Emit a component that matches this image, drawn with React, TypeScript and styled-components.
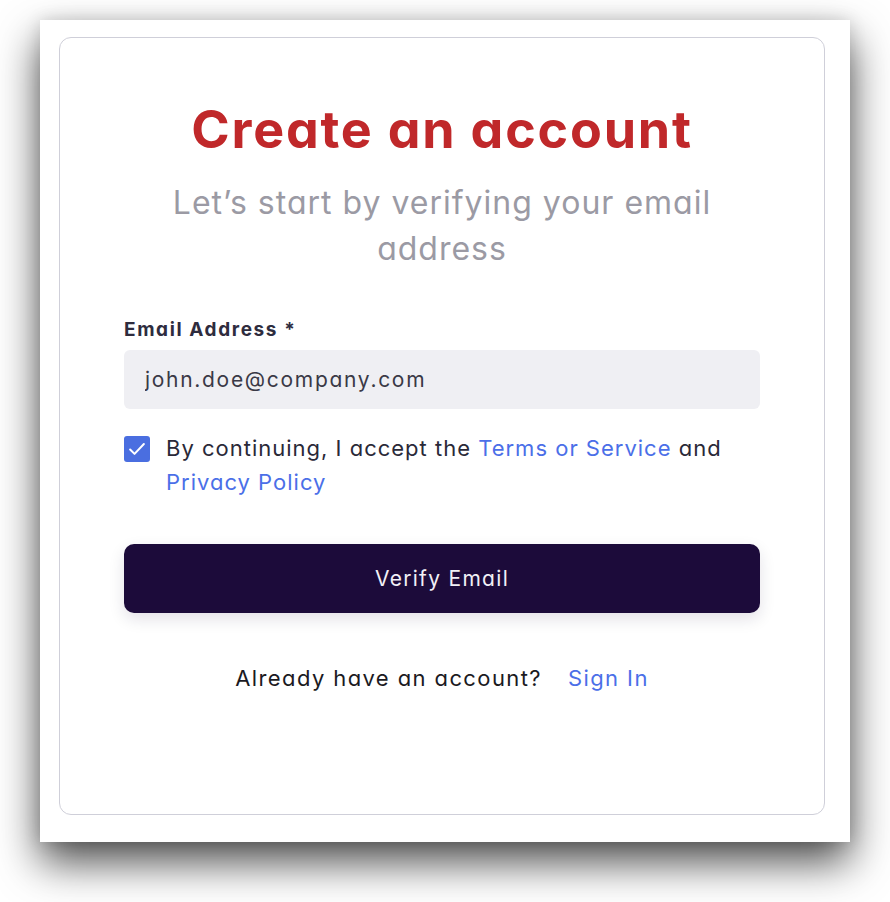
import React from "react";
import styled, { createGlobalStyle } from "styled-components";

const Global = createGlobalStyle`
  html, body { margin: 0; padding: 0; background: #ffffff; }
  body { font-family: Inter, "Noto Sans", sans-serif; font-feature-settings: "cv11" 1; }
  * { box-sizing: border-box; }
`;

const Page = styled.div`
  min-height: 902px;
  padding: 20px 40px 60px 40px;
`;

const Window = styled.div`
  width: 810px;
  height: 822px;
  background: #ffffff;
  box-shadow: 0 20px 40px rgba(0, 0, 0, 0.7), 0 0 16px rgba(0, 0, 0, 0.12);
  padding: 17px 25px 27px 19px;
  display: flex;
`;

const Card = styled.div`
  flex: 1;
  border: 1.5px solid #cfcfd9;
  border-radius: 12px;
  padding: 62px 64px 0 64px;
  display: flex;
  flex-direction: column;
`;

const Title = styled.h1`
  margin: 0;
  text-align: center;
  color: #c0282a;
  font-size: 52px;
  line-height: 60px;
  font-weight: 700;
  letter-spacing: 1.8px;
`;

const Subtitle = styled.p`
  margin: 20px 0 0;
  text-align: center;
  color: #9b9aa4;
  font-size: 32px;
  line-height: 46px;
  font-weight: 400;
  letter-spacing: 1px;
`;

const Label = styled.label`
  margin-top: 46px;
  font-size: 19px;
  line-height: 24px;
  font-weight: 700;
  color: #2e2c3e;
  letter-spacing: 1.6px;
`;

const Input = styled.input`
  margin-top: 8px;
  height: 59px;
  border: none;
  border-radius: 6px;
  background: #efeff3;
  padding: 0 21px;
  font-family: inherit;
  font-feature-settings: "cv11" 1;
  font-size: 21px;
  letter-spacing: 1.7px;
  color: #3a3946;
  outline: none;
`;

const CheckRow = styled.div`
  margin-top: 27px;
  display: flex;
  gap: 16px;
  align-items: flex-start;
`;

const Box = styled.span`
  flex: none;
  width: 26px;
  height: 26px;
  border-radius: 3px;
  background: #4a6ee0;
  display: flex;
  align-items: center;
  justify-content: center;
`;

const CheckText = styled.p`
  margin: -5px 0 0;
  font-size: 22px;
  line-height: 34px;
  letter-spacing: 1px;
  color: #2a2938;
`;

const Link = styled.a`
  color: #4b6fe8;
  text-decoration: none;
`;

const Button = styled.button`
  margin-top: 45px;
  height: 69px;
  border: none;
  border-radius: 10px;
  background: #1c0b3a;
  color: #f2f0f6;
  font-family: inherit;
  font-feature-settings: "cv11" 1;
  font-size: 21px;
  letter-spacing: 1.3px;
  box-shadow: 0 6px 16px rgba(28, 11, 58, 0.12);
`;

const Footer = styled.div`
  margin-top: 51px;
  display: flex;
  justify-content: center;
  gap: 26px;
  font-size: 22px;
  line-height: 28px;
  letter-spacing: 1.4px;
  color: #1b1a22;
`;

export default function App() {
  return (
    <>
      <Global />
      <Page>
        <Window>
          <Card>
            <Title>Create an account</Title>
            <Subtitle>Let’s start by verifying your email address</Subtitle>
            <Label>Email Address *</Label>
            <Input defaultValue="john.doe@company.com" />
            <CheckRow>
              <Box>
                <svg width="22" height="22" viewBox="0 0 24 24" fill="none" stroke="#fff" strokeWidth="2.2" strokeLinecap="round" strokeLinejoin="round">
                  <path d="M4.5 12.5l4.8 4.8L19.5 6.5" />
                </svg>
              </Box>
              <CheckText>
                By continuing, I accept the <Link href="#">Terms or Service</Link> and{" "}
                <Link href="#">Privacy Policy</Link>
              </CheckText>
            </CheckRow>
            <Button>Verify Email</Button>
            <Footer>
              <span>Already have an account?</span>
              <Link href="#">Sign In</Link>
            </Footer>
          </Card>
        </Window>
      </Page>
    </>
  );
}
